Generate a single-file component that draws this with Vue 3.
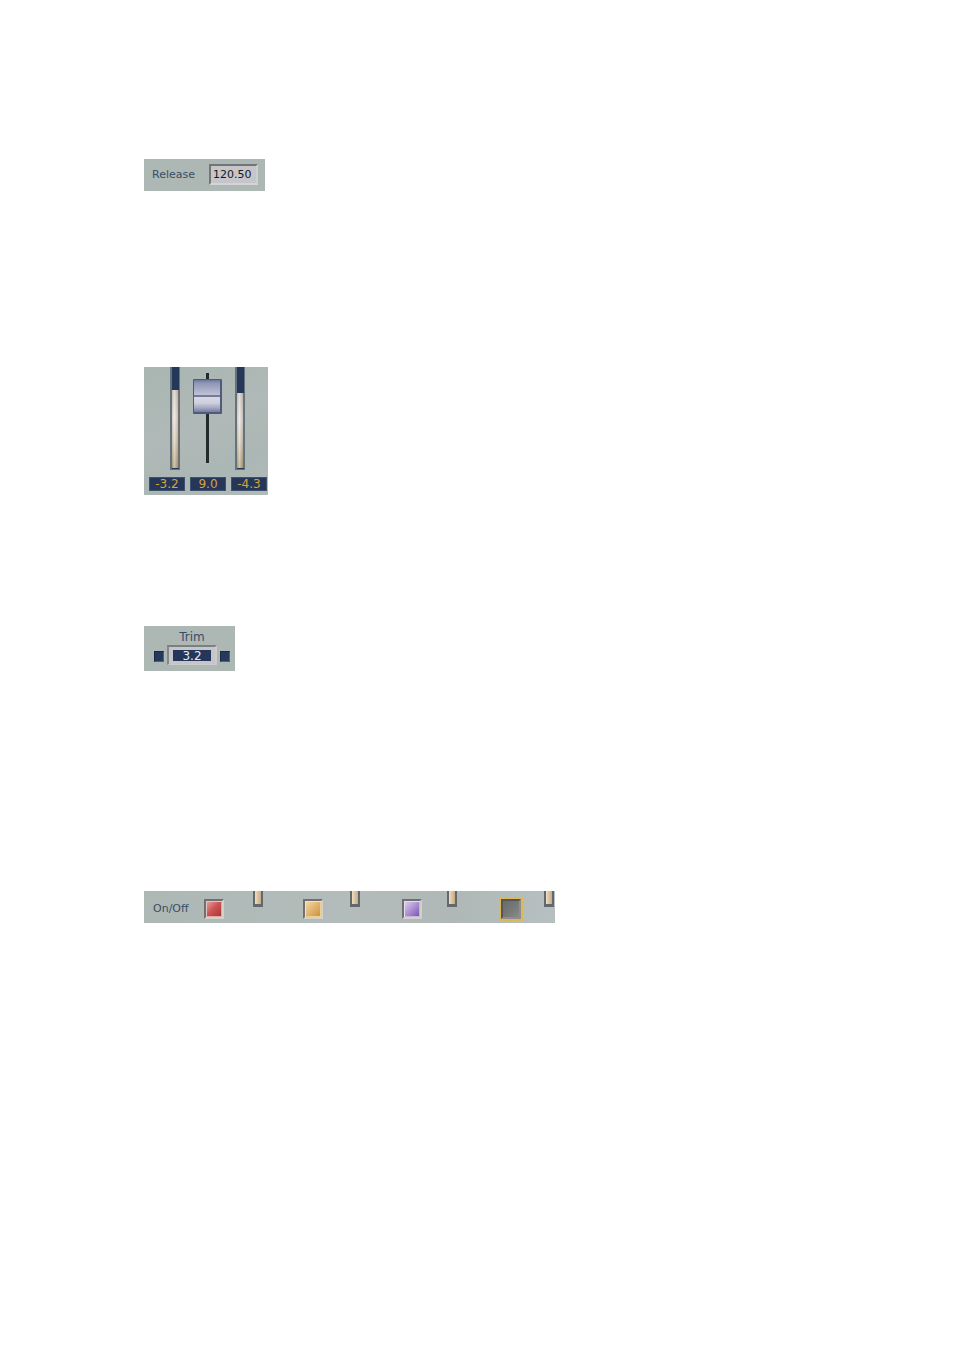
<script setup>
import { ref } from 'vue'

const release = ref('120.50')
const trim = ref('3.2')
const gain = ref(9)
const meters = ref([
  { id: 'left', level: 78, value: '-3.2' },
  { id: 'right', level: 75, value: '-4.3' },
])
const bands = ref([
  { id: 'low', tone: 'red', on: true },
  { id: 'mid', tone: 'amber', on: true },
  { id: 'high', tone: 'violet', on: true },
  { id: 'master', tone: 'idle', on: false },
])
</script>

<template>
  <main class="page">
    <section class="panel release">
      <label for="release">Release</label>
      <input id="release" v-model="release" class="field" type="text" />
    </section>

    <section class="panel mixer">
      <div class="strips">
        <div class="meter"><div class="level" :style="{ height: meters[0].level + '%' }"></div></div>
        <input v-model="gain" class="fader" type="range" min="-40" max="15" step="0.1" aria-label="Gain" />
        <div class="meter"><div class="level" :style="{ height: meters[1].level + '%' }"></div></div>
      </div>
      <div class="readouts">
        <output>{{ meters[0].value }}</output>
        <output>{{ Number(gain).toFixed(1) }}</output>
        <output>{{ meters[1].value }}</output>
      </div>
    </section>

    <section class="panel trim">
      <label for="trim">Trim</label>
      <div class="stepper">
        <button class="step" type="button" aria-label="Decrease trim"></button>
        <div class="frame"><input id="trim" v-model="trim" type="text" /></div>
        <button class="step" type="button" aria-label="Increase trim"></button>
      </div>
    </section>

    <section class="panel power">
      <div class="switches">
        <span class="caption">On/Off</span>
        <input
          v-for="band in bands"
          :key="band.id"
          v-model="band.on"
          type="checkbox"
          :class="['switch', band.tone]"
          :aria-label="'On/Off ' + band.id"
        />
      </div>
      <div class="stubs">
        <i v-for="band in bands" :key="band.id" class="stub"></i>
      </div>
    </section>
  </main>
</template>

<style>
body {
  margin: 0;
  background: #fff;
}
</style>

<style scoped>
.page {
  display: flex;
  flex-direction: column;
  align-items: flex-start;
  padding: 159px 24px 24px 144px;
  color: #3b4c66;
  font: 11px/14px "DejaVu Sans", sans-serif;
}
.page *,
.page {
  box-sizing: border-box;
}
input,
button {
  margin: 0;
  padding: 0;
  border: 0;
  border-radius: 0;
  font: inherit;
}
.panel {
  background: #adb8b5;
  overflow: hidden;
}

.release {
  display: flex;
  align-items: center;
  gap: 15px;
  width: 121px;
  padding: 5px 0 6px 8px;
}
.release label {
  width: 42px;
}
.field {
  width: 49px;
  height: 21px;
  padding: 0 0 1px 2px;
  border: 2px solid;
  border-color: #737679 #cdcfd2 #d3d4d7 #737679;
  background: #c5c5ca;
  color: #17191d;
}

.mixer {
  width: 124px;
  margin-top: 176px;
  padding: 0 1px 4px 5px;
  background: linear-gradient(160deg, #a9b6b2, #b0b9b7 45%, #abb7b4 75%, #b1bbb9);
}
.strips {
  display: flex;
  justify-content: center;
  gap: 13px;
  height: 110px;
  padding-right: 2px;
}
.meter {
  display: flex;
  align-items: flex-end;
  width: 10px;
  height: 103px;
  padding: 1px 1px 1px 0;
  background: #24385a;
  border: solid #65717b;
  border-width: 0 1px 1px 2px;
}
.level {
  width: 100%;
  background: linear-gradient(90deg, #0000001a, #ffffff4d 40%, #00000026), linear-gradient(#d5cdc3, #e6e1da 35%, #d8cebc 65%, #b9a67e);
  box-shadow: 1px 0 #77716d;
}
.fader {
  appearance: none;
  width: 29px;
  height: 90px;
  margin-top: 6px;
  writing-mode: vertical-lr;
  direction: rtl;
  background: linear-gradient(#24292e, #24292e) center / 3px 100% no-repeat;
}
.fader::-webkit-slider-thumb {
  appearance: none;
  box-sizing: border-box;
  width: 29px;
  height: 35px;
  border: solid #51597d;
  border-width: 1px 2px 2px 1px;
  border-radius: 1px;
  background: linear-gradient(#6c7699 0, #8e96b4 3px, #a3a9c3 8px, #c0c3d4 15px, #747a99 15px, #747a99 17px, #d8d9e2 17px, #cfd0de 23px, #a1a6c2 28px, #747ca0 100%);
}
.readouts {
  display: grid;
  grid-template-columns: repeat(3, 1fr);
  gap: 5px;
}
.readouts output {
  height: 14px;
  background: #24375a;
  border: 1px solid #42516a;
  color: #d7a33b;
  font-size: 12px;
  line-height: 12px;
  text-align: center;
}

.trim {
  display: flex;
  flex-direction: column;
  align-items: center;
  width: 91px;
  margin-top: 131px;
  padding: 4px 0 6px 5px;
}
.trim label {
  font-size: 12px;
}
.stepper {
  display: flex;
  align-items: center;
  gap: 3px;
  margin-top: 1px;
}
.step {
  width: 10px;
  height: 11px;
  margin-top: 3px;
  border: 1px solid;
  border-color: #1b2a43 #52617a #52617a #1b2a43;
  background: #24395b;
}
.frame {
  display: flex;
  width: 50px;
  height: 20px;
  padding: 3px 4px;
  border: 2px solid;
  border-color: #7d8081 #cbcbce #cbcbce #858789;
  border-bottom-width: 1px;
  background: #c5c5ca;
}
.frame input {
  width: 100%;
  background: #24375a;
  color: #e8ebf2;
  font-size: 12px;
  line-height: 12px;
  text-align: center;
}

.power {
  display: grid;
  width: 411px;
  margin-top: 220px;
  background: linear-gradient(90deg, #adb8b5, #b3bcba 50%, #afb8b7 75%, #b7c0c0);
}
.switches,
.stubs {
  grid-area: 1 / 1;
  display: flex;
  align-items: center;
}
.switches {
  gap: 79px;
  padding: 8px 0 4px 9px;
}
.caption {
  width: 51px;
  margin-right: -79px;
}
.switch {
  flex: none;
  appearance: none;
  width: 20px;
  height: 20px;
  border: 2px solid;
  border-color: #706f72 #d2d1c8 #d2d1c8 #706f72;
  background: linear-gradient(135deg, #e6a6a2, #cc5151 50%, #ab2e34);
  box-shadow: inset 1px 1px #e2c5c1, inset -1px -1px #dea9a7;
}
.amber {
  background: linear-gradient(135deg, #f5ddb0, #e2b46d 50%, #c78e3b);
  box-shadow: inset 1px 1px #f2e2c6, inset -1px -1px #eccd98;
}
.violet {
  background: linear-gradient(135deg, #e2d6f0, #a78bcf 55%, #7250a9);
  box-shadow: inset 1px 1px #e3dcec, inset -1px -1px #c6b5de;
}
.idle {
  border-color: #55565a #8d8e90 #8d8e90 #55565a;
  background: linear-gradient(135deg, #686b6c, #757876 50%, #898a8c);
  box-shadow: 0 0 0 2px #dcb957;
}
.stubs {
  align-items: flex-start;
  gap: 87px;
  padding-left: 109px;
  pointer-events: none;
}
.stub {
  flex: none;
  width: 10px;
  height: 16px;
  border: solid #62686e;
  border-width: 0 2px 3px;
  background: linear-gradient(90deg, #efdcc0, #c6aa86);
}
</style>
